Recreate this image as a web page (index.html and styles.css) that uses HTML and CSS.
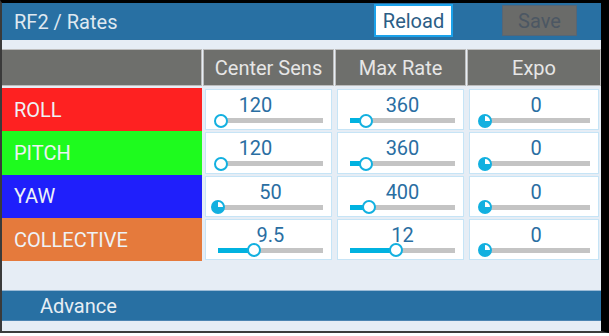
FILE: index.html
```html
<!DOCTYPE html>
<html lang="en">
<head>
    <meta charset="UTF-8">
    <meta name="viewport" content="width=device-width, initial-scale=1.0">
    <title>RF2 / Rates</title>
    <link rel="stylesheet" href="styles.css">
</head>
<body>
    <div class="frame">
        <header>
            <div class="title">RF2 / Rates</div>
            <div class="actions">
                <button class="btn-reload">Reload</button>
                <button class="btn-save" disabled>Save</button>
            </div>
        </header>

        <div class="rates">
            <div class="head"></div>
            <div class="head">Center Sens</div>
            <div class="head">Max Rate</div>
            <div class="head">Expo</div>

            <!-- roll -->
            <div class="axis roll">ROLL</div>
            <div class="cell">
                <div class="num shift">120</div>
                <div class="slider"><div class="fill" style="width: 3%"></div><div class="thumb" style="left: 3%"></div></div>
            </div>
            <div class="cell">
                <div class="num">360</div>
                <div class="slider"><div class="fill" style="width: 15%"></div><div class="thumb" style="left: 15%"></div></div>
            </div>
            <div class="cell">
                <div class="num">0</div>
                <div class="slider"><div class="fill" style="width: 0%"></div><div class="thumb min" style="left: 0%"></div></div>
            </div>

            <!-- pitch -->
            <div class="axis pitch">PITCH</div>
            <div class="cell">
                <div class="num shift">120</div>
                <div class="slider"><div class="fill" style="width: 3%"></div><div class="thumb" style="left: 3%"></div></div>
            </div>
            <div class="cell">
                <div class="num">360</div>
                <div class="slider"><div class="fill" style="width: 15%"></div><div class="thumb" style="left: 15%"></div></div>
            </div>
            <div class="cell">
                <div class="num">0</div>
                <div class="slider"><div class="fill" style="width: 0%"></div><div class="thumb min" style="left: 0%"></div></div>
            </div>

            <!-- yaw -->
            <div class="axis yaw">YAW</div>
            <div class="cell">
                <div class="num">50</div>
                <div class="slider"><div class="fill" style="width: 0%"></div><div class="thumb low" style="left: 0%"></div></div>
            </div>
            <div class="cell">
                <div class="num">400</div>
                <div class="slider"><div class="fill" style="width: 18%"></div><div class="thumb" style="left: 18%"></div></div>
            </div>
            <div class="cell">
                <div class="num">0</div>
                <div class="slider"><div class="fill" style="width: 0%"></div><div class="thumb min" style="left: 0%"></div></div>
            </div>

            <!-- collective -->
            <div class="axis collective">COLLECTIVE</div>
            <div class="cell">
                <div class="num">9.5</div>
                <div class="slider"><div class="fill" style="width: 34%"></div><div class="thumb" style="left: 34%"></div></div>
            </div>
            <div class="cell">
                <div class="num">12</div>
                <div class="slider"><div class="fill" style="width: 44%"></div><div class="thumb" style="left: 44%"></div></div>
            </div>
            <div class="cell">
                <div class="num">0</div>
                <div class="slider"><div class="fill" style="width: 0%"></div><div class="thumb min" style="left: 0%"></div></div>
            </div>
        </div>

        <div class="section">Advance</div>
    </div>
</body>
</html>
```

FILE: styles.css
```css
body {
    margin: 0;
    padding: 0;
    background: #ffffff;
    font-family: Roboto, "Liberation Sans", sans-serif;
}
.frame {
    width: 599px;
    height: 328px;
    background: #e6edf5;
    border-top: 3px solid #000;
    border-left: 2px solid #3a3a3a;
    border-right: 8px solid #000;
    border-bottom: 2px solid #3c3c3c;
    display: flex;
    flex-direction: column;
}
header {
    height: 37px;
    background: #2870a3;
    display: flex;
    align-items: center;
    padding: 0 24px 0 12px;
}
.title {
    color: #dfe8f0;
    font-size: 20px;
}
.actions {
    margin-left: auto;
    display: flex;
    align-items: center;
    gap: 49px;
}
.actions button {
    font-family: inherit;
    font-size: 20px;
    padding: 0;
}
.btn-reload {
    width: 79px;
    height: 33px;
    margin-top: -2px;
    background: #fff;
    color: #2b5d85;
    border: 2px solid #1ca2ea;
}
.btn-save {
    width: 75px;
    height: 31px;
    margin-top: -2px;
    background: #6a6b69;
    color: #4c5763;
    border: 1px solid #566676;
}
.rates {
    margin-top: 9px;
    display: grid;
    grid-template-columns: 200px 131px 131px 1fr;
    grid-template-rows: 39px repeat(4, 43.3px);
    column-gap: 1px;
}
.head {
    background: #6e6f6c;
    border: 1px solid #bdbdbd;
    color: #e6e6e6;
    font-size: 20px;
    display: flex;
    align-items: center;
    justify-content: center;
    margin-bottom: 2px;
}
.head:first-child {
    border-left: none;
}
.axis {
    color: #eef2f6;
    font-size: 20px;
    display: flex;
    align-items: center;
    padding-left: 12px;
}
.roll { background: #fe2121; }
.pitch { background: #1efb1e; }
.yaw { background: #1f1ffb; }
.collective { background: #e57a3c; }
.cell {
    background: #fff;
    border: 1px solid #c6e4f6;
    margin: 1px 2px;
    padding: 8px 8px 0 12px;
}
.num {
    color: #2a6ea2;
    font-size: 20px;
    line-height: 15px;
    text-align: center;
}
.num.shift {
    padding-right: 30px;
}
.slider {
    position: relative;
    height: 5px;
    margin-top: 5px;
    background: #c4c4c4;
}
.fill {
    position: absolute;
    left: 0;
    top: 0;
    height: 5px;
    background: #00b2e0;
}
.thumb {
    position: absolute;
    top: 50%;
    width: 10px;
    height: 10px;
    margin: -7px 0 0 -7px;
    border: 2px solid #12b0e0;
    border-radius: 50%;
    background: #fff;
}
.thumb.min {
    left: 3px !important;
    background: conic-gradient(#fff 0 25%, #12b0e0 0);
}
.thumb.low {
    left: 0 !important;
    background: conic-gradient(#fff 0 25%, #12b0e0 0);
}
.section {
    margin-top: 29px;
    height: 29px;
    background: #2870a3;
    border-top: 1px solid #9bbbd6;
    border-bottom: 1px solid #4d85b2;
    color: #e6eef4;
    font-size: 20px;
    display: flex;
    align-items: center;
    padding-left: 38px;
}
```
